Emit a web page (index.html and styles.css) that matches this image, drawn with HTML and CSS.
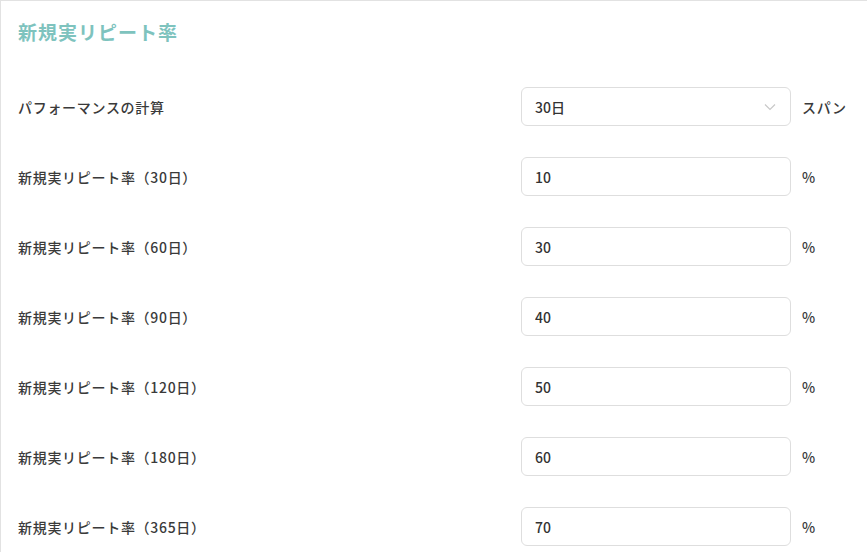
FILE: index.html
```html
<!DOCTYPE html>
<html lang="ja">
<head>
    <meta charset="UTF-8">
    <meta name="viewport" content="width=device-width, initial-scale=1.0">
    <title>新規実リピート率</title>
    <link rel="stylesheet" href="styles.css">
</head>
<body>
    <div class="card">
        <h2 class="title">新規実リピート率</h2>

        <div class="form">
            <div class="row">
                <label class="label">パフォーマンスの計算</label>
                <div class="select">
                    <span>30日</span>
                    <svg class="chevron" width="12" height="8" viewBox="0 0 12 8">
                        <path d="M1 1.5 L6 6.5 L11 1.5" fill="none" stroke="#c8c8c8" stroke-width="1.2"/>
                    </svg>
                </div>
                <span class="unit">スパン</span>
            </div>

            <div class="row">
                <label class="label">新規実リピート率（30日）</label>
                <input class="input" type="text" value="10">
                <span class="unit">%</span>
            </div>

            <div class="row">
                <label class="label">新規実リピート率（60日）</label>
                <input class="input" type="text" value="30">
                <span class="unit">%</span>
            </div>

            <div class="row">
                <label class="label">新規実リピート率（90日）</label>
                <input class="input" type="text" value="40">
                <span class="unit">%</span>
            </div>

            <div class="row">
                <label class="label">新規実リピート率（120日）</label>
                <input class="input" type="text" value="50">
                <span class="unit">%</span>
            </div>

            <div class="row">
                <label class="label">新規実リピート率（180日）</label>
                <input class="input" type="text" value="60">
                <span class="unit">%</span>
            </div>

            <div class="row">
                <label class="label">新規実リピート率（365日）</label>
                <input class="input" type="text" value="70">
                <span class="unit">%</span>
            </div>
        </div>
    </div>
</body>
</html>
```

FILE: styles.css
```css
/* 全体 */
body {
    margin: 0;
    background: #fff;
    font-family: "Noto Sans CJK JP", "Noto Sans", sans-serif;
    color: #333;
    overflow: hidden;
}

.card {
    box-sizing: border-box;
    border-top: 1px solid #e2e2e2;
    border-left: 1px solid #e2e2e2;
    padding: 17px 0 0 17px;
    height: 100vh;
}

.title {
    margin: 0;
    font-size: 19px;
    line-height: 28px;
    font-weight: 700;
    color: #7ec3be;
    letter-spacing: 1px;
}

.form {
    margin-top: 41px;
    display: flex;
    flex-direction: column;
    gap: 31px;
}

.row {
    display: flex;
    align-items: center;
}

.label {
    width: 503px;
    font-size: 14px;
    font-weight: 500;
    color: #3a3a3a;
    letter-spacing: 0.7px;
}

.select,
.input {
    box-sizing: border-box;
    width: 270px;
    height: 39px;
    border: 1px solid #dedede;
    border-radius: 6px;
    background: #fff;
    font-family: inherit;
    font-size: 14px;
    font-weight: 500;
    color: #333;
    padding: 0 13px;
}

.select {
    display: flex;
    align-items: center;
    justify-content: space-between;
    padding-right: 14px;
}

.input {
    outline: none;
}

.unit {
    margin-left: 11px;
    font-size: 14px;
    font-weight: 500;
    color: #3a3a3a;
    letter-spacing: 0.7px;
}
```
